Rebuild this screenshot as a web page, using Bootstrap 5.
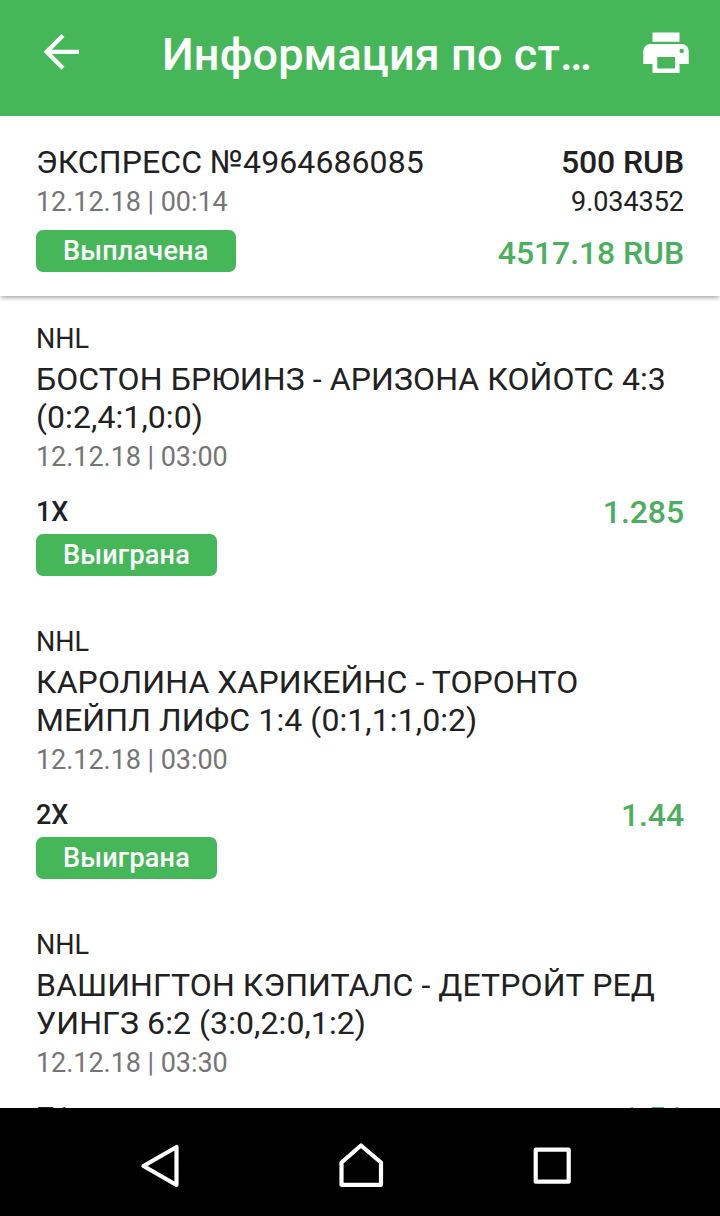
<!DOCTYPE html>
<html lang="ru">
<head>
<meta charset="utf-8">
<meta name="viewport" content="width=device-width, initial-scale=1">
<title>Информация по ставке</title>
<link href="https://cdn.jsdelivr.net/npm/bootstrap@5.3.0/dist/css/bootstrap.min.css" rel="stylesheet">
<style>
  :root { --brand: #46b759; --ink: #212121; --muted: #757575; }
  body { font-family: Roboto, "Noto Sans", sans-serif; color: var(--ink); background: #fff; }
  svg { display: block; }
  .topbar { height: 116px; background: var(--brand); padding: 0 30px 10px 36px; }
  .topbar-title { font-size: 45px; line-height: 53px; font-weight: 500; letter-spacing: .1px; margin-left: 76px; padding-top: 3px; }
  .summary { height: 180px; padding: 27px 36px 0; box-shadow: 0 3px 4px -1px rgba(0,0,0,.33); z-index: 1; }
  .t-lg { font-size: 32px; line-height: 38px; letter-spacing: .09px; }
  .t-lg.fw-medium { letter-spacing: -.1px; }
  .t-md { font-size: 27px; line-height: 32px; letter-spacing: -.05px; }
  .fw-medium { font-weight: 500; }
  .stamp { margin-top: 5px; }
  .muted { color: var(--muted); }
  .win { color: #4caf60; }
  .payout { margin-top: 16px; }
  .status { width: fit-content; background: var(--brand); color: #fff; height: 42px; line-height: 42px; font-size: 27px; letter-spacing: .23px; border-radius: 7px; padding: 0 27px; }
  .summary .status { margin-top: 12px; }
  .events { padding: 27px 36px 0; }
  .bet { height: 303px; }
  .teams { margin-top: 5px; }
  .pick { margin: 20px 0 3px; }
  .pick .t-md { padding-top: 3px; }
  .sysbar { height: 108px; }
</style>
</head>
<body>
<div class="d-flex flex-column vh-100 overflow-hidden">
  <header class="topbar d-flex align-items-center flex-shrink-0 text-white">
    <svg width="50" height="50" viewBox="0 0 50 50" fill="none" stroke="#fff" stroke-width="4.2"><path d="M43 23.800H10M27 7.400 10.600 23.800 27 40.200"/></svg>
    <h1 class="topbar-title text-nowrap mb-0">Информация по ст…</h1>
    <svg class="ms-auto" width="48" height="48" viewBox="0 0 48 48"><path fill="#fff" fill-rule="evenodd" d="M10.500 3.500h27v9.200h-27zM7.800 15h31.900a7 7 0 0 1 7 7V35h-9.200V44h-27V35H1.300V22a7 7 0 0 1 6.500-7zM15.300 28v11.500h17.700V28zM39.700 19.700a2.200 2.200 0 1 0 0 4.400 2.200 2.200 0 0 0 0-4.400z"/></svg>
  </header>

  <section class="summary d-flex justify-content-between flex-shrink-0 bg-white position-relative">
    <div>
      <div class="t-lg">ЭКСПРЕСС №4964686085</div>
      <div class="t-md muted stamp">12.12.18 | 00:14</div>
      <div class="status fw-medium">Выплачена</div>
    </div>
    <div class="text-end">
      <div class="t-lg fw-medium">500 RUB</div>
      <div class="t-md stamp">9.034352</div>
      <div class="t-lg fw-medium win payout">4517.18 RUB</div>
    </div>
  </section>

  <main class="events flex-grow-1 overflow-hidden">
    <article class="bet">
      <div class="t-md">NHL</div>
      <div class="t-lg teams">БОСТОН БРЮИНЗ - АРИЗОНА КОЙОТС 4:3 (0:2,4:1,0:0)</div>
      <div class="t-md muted stamp">12.12.18 | 03:00</div>
      <div class="pick d-flex justify-content-between"><span class="t-md fw-medium">1X</span><span class="t-lg fw-medium win">1.285</span></div>
      <div class="status fw-medium">Выиграна</div>
    </article>
    <article class="bet">
      <div class="t-md">NHL</div>
      <div class="t-lg teams">КАРОЛИНА ХАРИКЕЙНС - ТОРОНТО МЕЙПЛ ЛИФС 1:4 (0:1,1:1,0:2)</div>
      <div class="t-md muted stamp">12.12.18 | 03:00</div>
      <div class="pick d-flex justify-content-between"><span class="t-md fw-medium">2X</span><span class="t-lg fw-medium win">1.44</span></div>
      <div class="status fw-medium">Выиграна</div>
    </article>
    <article class="bet">
      <div class="t-md">NHL</div>
      <div class="t-lg teams">ВАШИНГТОН КЭПИТАЛС - ДЕТРОЙТ РЕД УИНГЗ 6:2 (3:0,2:0,1:2)</div>
      <div class="t-md muted stamp">12.12.18 | 03:30</div>
      <div class="pick d-flex justify-content-between"><span class="t-md fw-medium">П1</span><span class="t-lg fw-medium win">1.51</span></div>
    </article>
  </main>

  <nav class="sysbar bg-black flex-shrink-0 d-flex">
    <svg width="720" height="108" viewBox="0 0 720 108" fill="none" stroke="#fff" stroke-width="4.200" stroke-linejoin="round"><path d="M143.500 58 176.500 39V77z"/><path d="M361 37.500 341.500 54.500V76.800H381V54.500z"/><rect x="535.700" y="41.700" width="33" height="32"/></svg>
  </nav>
</div>
<script src="https://cdn.jsdelivr.net/npm/bootstrap@5.3.0/dist/js/bootstrap.bundle.min.js"></script>
</body>
</html>
